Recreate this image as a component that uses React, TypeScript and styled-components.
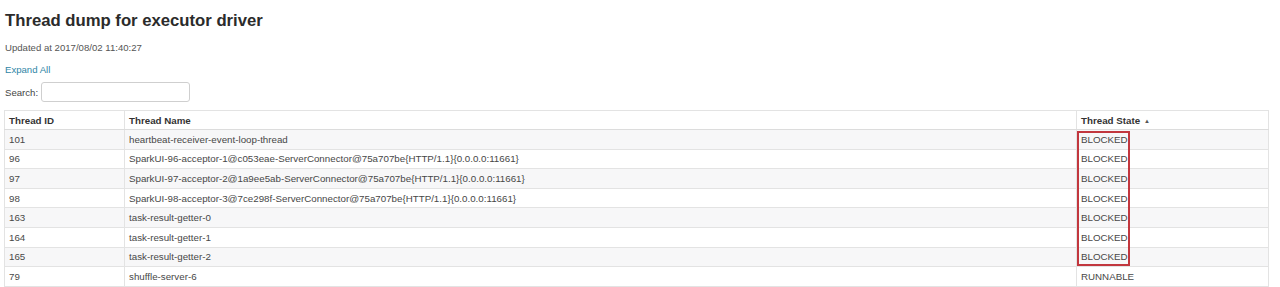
import React from "react";
import styled, { createGlobalStyle } from "styled-components";

const Global = createGlobalStyle`
  html, body { margin: 0; padding: 0; background: #fff; }
  body { font-family: "Liberation Sans", Arial, sans-serif; color: #333; }
`;

const Page = styled.div`
  padding: 0 12px 0 4px;
  display: flex;
  flex-direction: column;
`;

const Title = styled.h3`
  font-size: 16.7px;
  font-weight: bold;
  color: #2b2b2b;
  margin: 11px 0 0 1px;
  line-height: 20px;
`;

const Meta = styled.div`
  font-size: 9.6px;
  color: #555;
  margin: 11px 0 0 1px;
  line-height: 12px;
`;

const Link = styled.a`
  font-size: 9.6px;
  color: #2f86a6;
  text-decoration: none;
  margin: 10px 0 0 1px;
  line-height: 12px;
`;

const SearchRow = styled.label`
  display: flex;
  align-items: center;
  gap: 3px;
  font-size: 9.6px;
  color: #444;
  margin: 6px 0 0 1px;
`;

const SearchInput = styled.input`
  width: 149px;
  height: 20px;
  box-sizing: border-box;
  border: 1px solid #cfcfcf;
  border-radius: 3px;
  padding: 0 4px;
  outline: none;
`;

const TableWrap = styled.div`
  position: relative;
  margin-top: 8px;
`;

const Table = styled.table`
  width: 1264px;
  border-collapse: collapse;
  border: 1px solid #e3e3e3;
  font-size: 9.75px;
  table-layout: fixed;
`;

const Th = styled.th<{ $w: number }>`
  box-sizing: border-box;
  width: ${(p) => p.$w}px;
  text-align: left;
  font-weight: bold;
  color: #333;
  height: 19px;
  padding: 0 4px;
  border-left: 1px solid #e3e3e3;
  border-bottom: 1px solid #dcdcdc;
`;

const Row = styled.tr<{ $odd: boolean }>`
  background: ${(p) => (p.$odd ? "#f7f7f8" : "#fff")};
`;

const Td = styled.td`
  height: 18.6px;
  padding: 0 4px;
  color: #474747;
  border-left: 1px solid #e3e3e3;
  border-top: 1px solid #e3e3e3;
  white-space: nowrap;
`;

const SortMark = styled.span`
  font-size: 6px;
  margin-left: 4px;
  color: #555;
  vertical-align: middle;
`;

const Highlight = styled.div`
  position: absolute;
  left: 1073px;
  top: 21px;
  width: 53px;
  height: 135px;
  box-sizing: border-box;
  border: 2px solid #c2373e;
  pointer-events: none;
`;

const rows: [string, string, string][] = [
  ["101", "heartbeat-receiver-event-loop-thread", "BLOCKED"],
  ["96", "SparkUI-96-acceptor-1@c053eae-ServerConnector@75a707be{HTTP/1.1}{0.0.0.0:11661}", "BLOCKED"],
  ["97", "SparkUI-97-acceptor-2@1a9ee5ab-ServerConnector@75a707be{HTTP/1.1}{0.0.0.0:11661}", "BLOCKED"],
  ["98", "SparkUI-98-acceptor-3@7ce298f-ServerConnector@75a707be{HTTP/1.1}{0.0.0.0:11661}", "BLOCKED"],
  ["163", "task-result-getter-0", "BLOCKED"],
  ["164", "task-result-getter-1", "BLOCKED"],
  ["165", "task-result-getter-2", "BLOCKED"],
  ["79", "shuffle-server-6", "RUNNABLE"],
];

export default function App() {
  return (
    <Page>
      <Global />
      <Title>Thread dump for executor driver</Title>
      <Meta>Updated at 2017/08/02 11:40:27</Meta>
      <Link href="#">Expand All</Link>
      <SearchRow>
        Search:
        <SearchInput type="text" />
      </SearchRow>
      <TableWrap>
        <Table>
          <thead>
            <tr>
              <Th $w={120}>Thread ID</Th>
              <Th $w={952}>Thread Name</Th>
              <Th $w={192}>
                Thread State<SortMark>▲</SortMark>
              </Th>
            </tr>
          </thead>
          <tbody>
            {rows.map((r, i) => (
              <Row key={r[0]} $odd={i % 2 === 0}>
                <Td>{r[0]}</Td>
                <Td>{r[1]}</Td>
                <Td>{r[2]}</Td>
              </Row>
            ))}
          </tbody>
        </Table>
        <Highlight />
      </TableWrap>
    </Page>
  );
}
